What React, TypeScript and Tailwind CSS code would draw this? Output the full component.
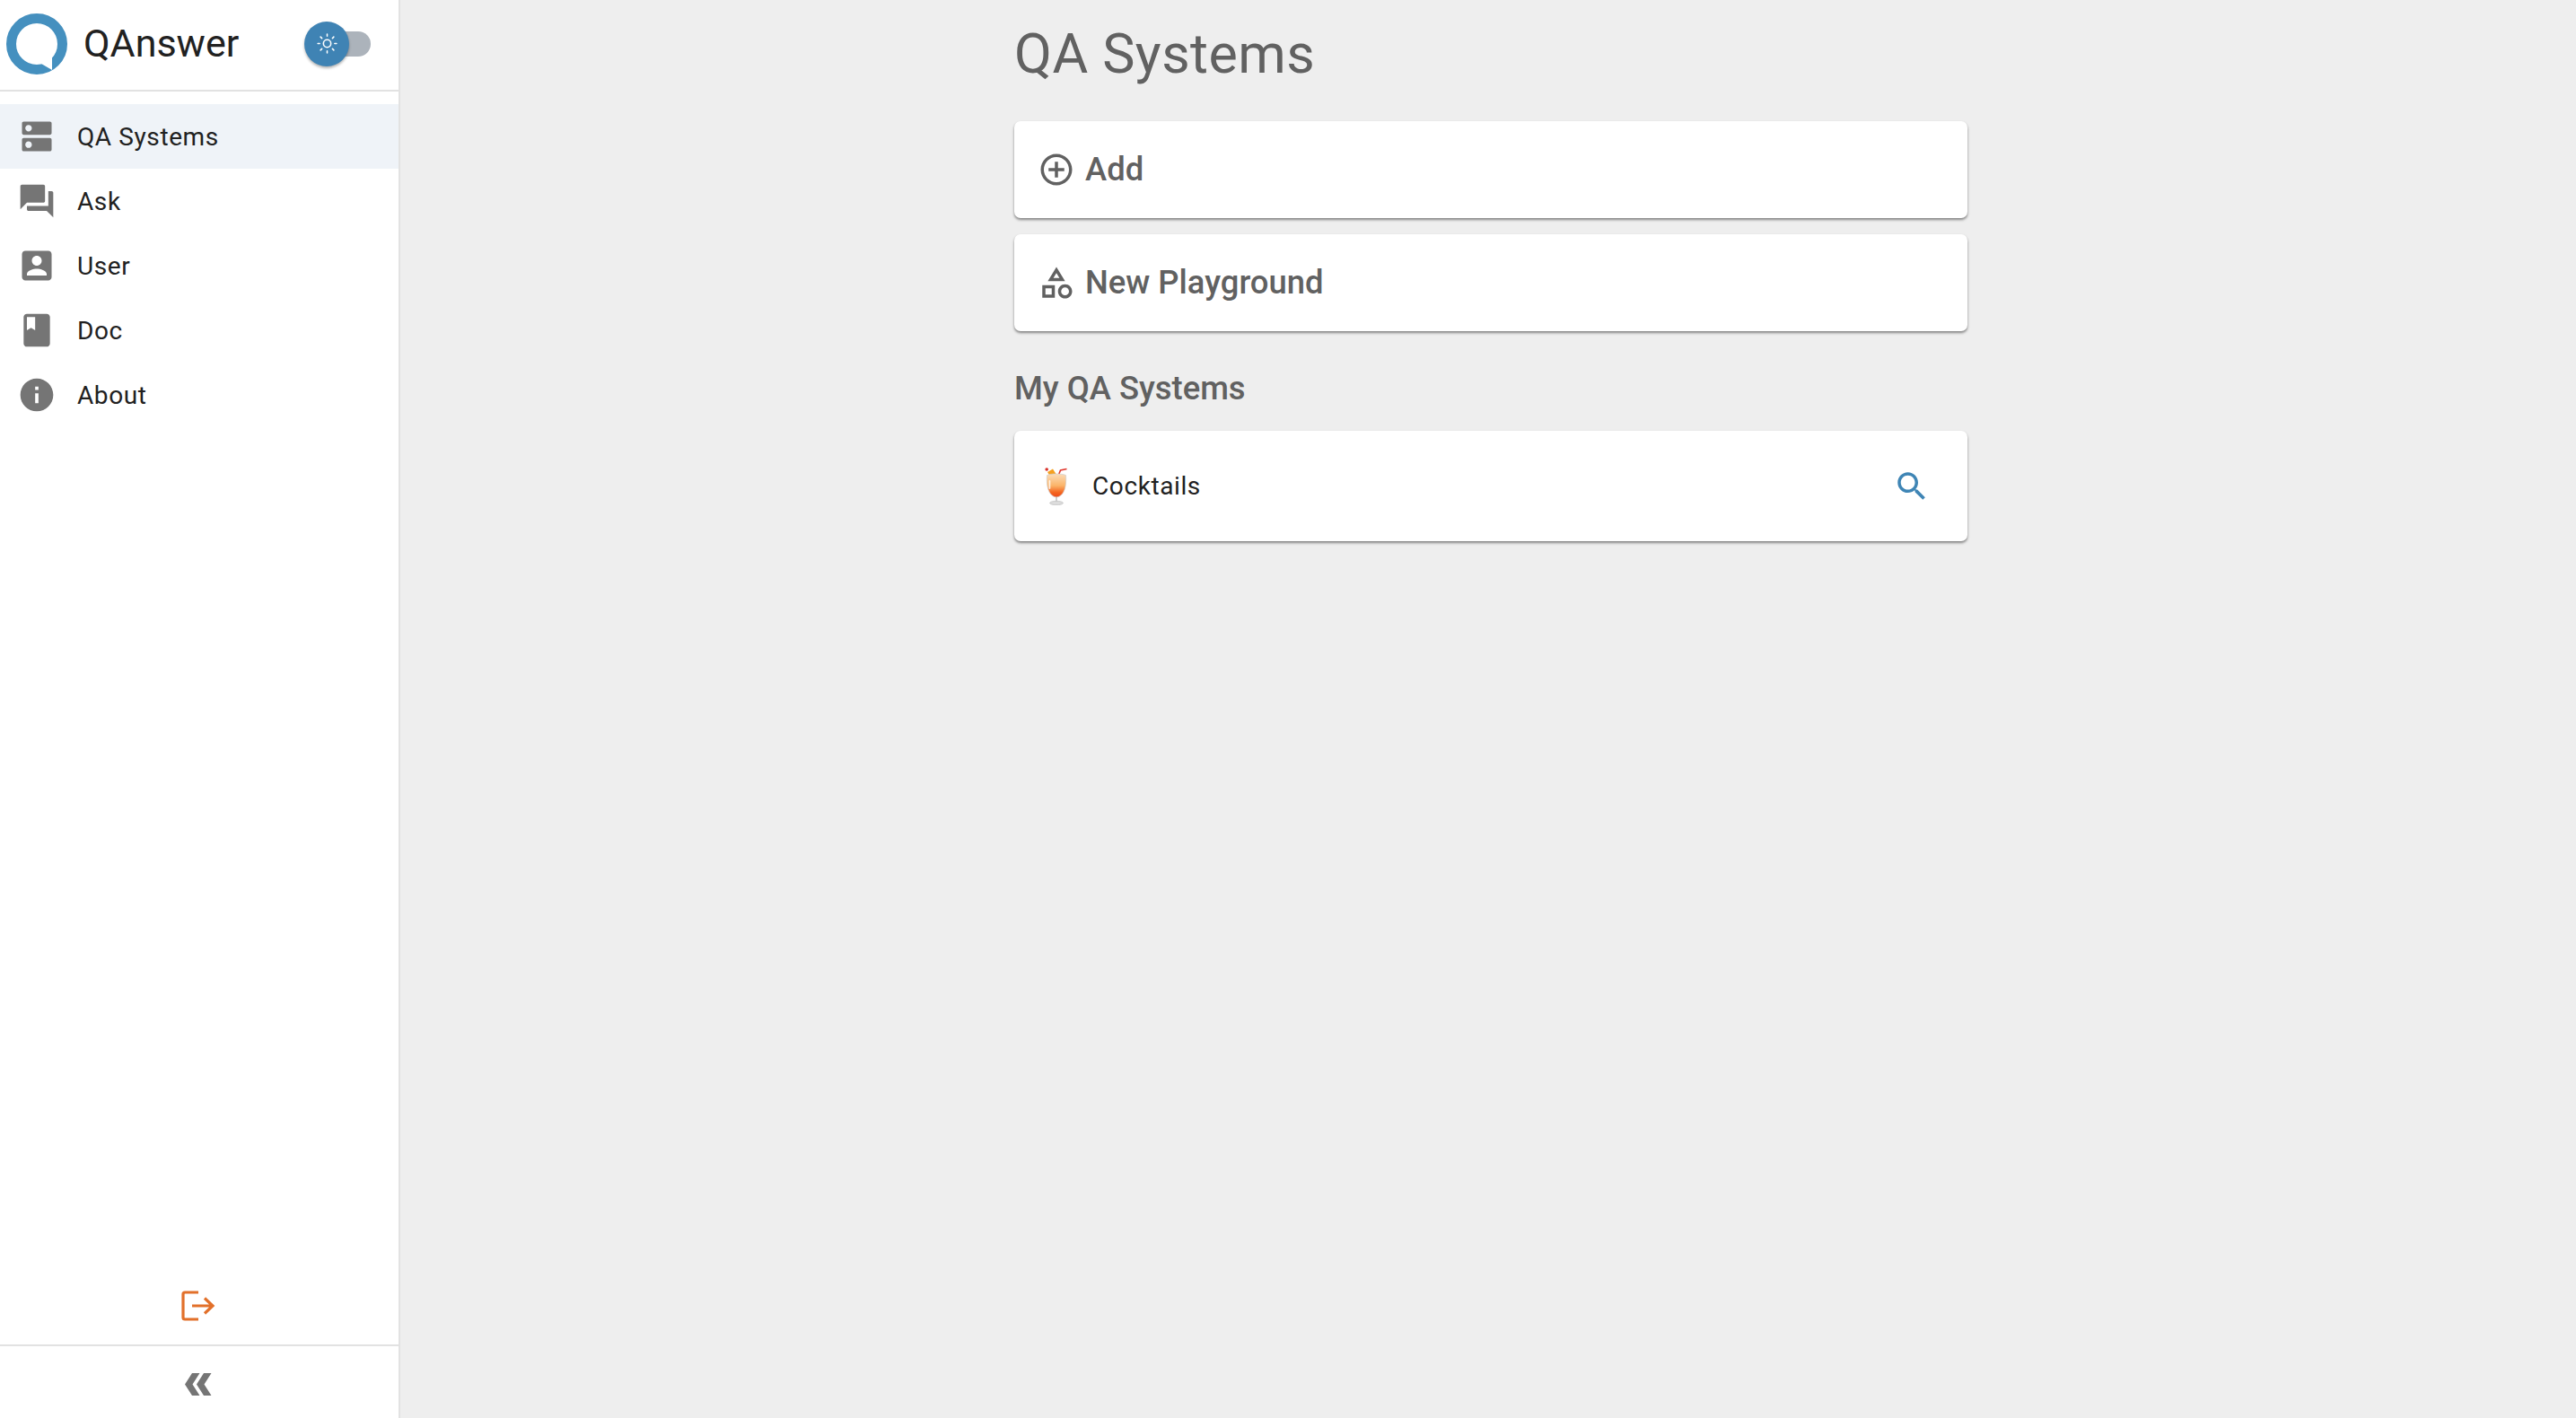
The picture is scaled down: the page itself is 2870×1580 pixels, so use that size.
import React from "react";
import { Sun } from "lucide-react";

const paths = {
  dns: "M20 13H4c-.55 0-1 .45-1 1v6c0 .55.45 1 1 1h16c.55 0 1-.45 1-1v-6c0-.55-.45-1-1-1zM7 19c-1.1 0-2-.9-2-2s.9-2 2-2 2 .9 2 2-.9 2-2 2zM20 3H4c-.55 0-1 .45-1 1v6c0 .55.45 1 1 1h16c.55 0 1-.45 1-1V4c0-.55-.45-1-1-1zM7 9c-1.1 0-2-.9-2-2s.9-2 2-2 2 .9 2 2-.9 2-2 2z",
  forum: "M21 6h-2v9H6v2c0 .55.45 1 1 1h11l4 4V7c0-.55-.45-1-1-1zm-4 6V3c0-.55-.45-1-1-1H3c-.55 0-1 .45-1 1v14l4-4h10c.55 0 1-.45 1-1z",
  user: "M19 3H5c-1.11 0-2 .9-2 2v14c0 1.1.89 2 2 2h14c1.1 0 2-.9 2-2V5c0-1.1-.9-2-2-2zm-7 3c1.66 0 3 1.34 3 3s-1.34 3-3 3-3-1.34-3-3 1.34-3 3-3zm6 12H6v-1c0-2 4-3.1 6-3.1s6 1.1 6 3.1v1z",
  book: "M18 2H6c-1.1 0-2 .9-2 2v16c0 1.1.9 2 2 2h12c1.1 0 2-.9 2-2V4c0-1.1-.9-2-2-2zM6 4h5v8l-2.5-1.5L6 12V4z",
  info: "M12 2C6.48 2 2 6.48 2 12s4.48 10 10 10 10-4.48 10-10S17.52 2 12 2zm1 15h-2v-6h2v6zm0-8h-2V7h2v2z",
  add: "M13 7h-2v4H7v2h4v4h2v-4h4v-2h-4V7zm-1-5C6.48 2 2 6.48 2 12s4.48 10 10 10 10-4.48 10-10S17.52 2 12 2zm0 18c-4.41 0-8-3.59-8-8s3.59-8 8-8 8 3.59 8 8-3.59 8-8 8z",
  category: "M12 2l-5.5 9h11L12 2zm0 3.84L13.93 9h-3.87L12 5.84zM17.5 13c-2.49 0-4.5 2.01-4.5 4.5s2.01 4.5 4.5 4.5 4.5-2.01 4.5-4.5-2.01-4.5-4.5-4.5zm0 7c-1.38 0-2.5-1.12-2.5-2.5s1.12-2.5 2.5-2.5 2.5 1.12 2.5 2.5-1.12 2.5-2.5 2.5zM3 21.5h8v-8H3v8zm2-6h4v4H5v-4z",
  search: "M15.5 14h-.79l-.28-.27C15.41 12.59 16 11.11 16 9.5 16 5.91 13.09 3 9.5 3S3 5.91 3 9.5 5.91 16 9.5 16c1.61 0 3.09-.59 4.23-1.57l.27.28v.79l5 4.99L20.49 19l-4.99-5zm-6 0C7.01 14 5 11.99 5 9.5S7.01 5 9.5 5 14 7.01 14 9.5 11.99 14 9.5 14z",
};

const Icon = ({ d, className }: { d: string; className: string }) => (
  <svg viewBox="0 0 24 24" fill="currentColor" className={className}>
    <path d={d} />
  </svg>
);

const Logo = () => (
  <svg viewBox="0 0 68 68" className="w-[68px] h-[68px] shrink-0">
    <circle cx="34" cy="34" r="28.5" fill="none" stroke="#4590bf" strokeWidth="11" />
    <polygon points="51,48 51,63 39,56" fill="#ffffff" />
  </svg>
);

const CocktailIcon = () => (
  <svg viewBox="0 0 26 42" className="w-[26px] h-[42px]">
    <defs>
      <linearGradient id="drink" x1="0" y1="0" x2="0" y2="1">
        <stop offset="0" stopColor="#fbdcb8" />
        <stop offset="0.5" stopColor="#fbb56a" />
        <stop offset="0.8" stopColor="#f4641f" />
        <stop offset="1" stopColor="#ee4a1a" />
      </linearGradient>
    </defs>
    <path d="M15.5 8 L17.5 3 L24.5 1.5" fill="none" stroke="#e0352b" strokeWidth="1.6" />
    <polygon points="3,5 9,1.5 12.5,7 6,10" fill="#f5a01f" />
    <circle cx="2.2" cy="2" r="1.8" fill="#d8322b" />
    <path d="M2.5 8.5 C7 6.5 19 6.5 23.5 8.5 C24.5 20 22 32 13 33 C4 32 1.5 20 2.5 8.5Z" fill="url(#drink)" stroke="#cfcfcf" strokeWidth="0.7" />
    <rect x="4.5" y="14" width="1.8" height="10" rx="0.9" fill="#ffffff" opacity="0.8" />
    <rect x="12.2" y="33" width="1.6" height="5" fill="#c4c4c4" />
    <ellipse cx="13" cy="39.5" rx="7.5" ry="2.2" fill="#dcdcdc" stroke="#b8b8b8" strokeWidth="0.6" />
  </svg>
);

const navItems = [
  { label: "QA Systems", icon: paths.dns, active: true },
  { label: "Ask", icon: paths.forum },
  { label: "User", icon: paths.user },
  { label: "Doc", icon: paths.book },
  { label: "About", icon: paths.info },
];

const Card = ({ children, className }: { children: React.ReactNode; className: string }) => (
  <div className={`flex items-center bg-white rounded-[7px] shadow-[0_2px_3px_rgba(0,0,0,0.45)] ${className}`}>
    {children}
  </div>
);

export default function App() {
  return (
    <div className="flex h-[1580px] w-[2870px] overflow-hidden bg-[#eeeeee] font-['Roboto',sans-serif]">
      {/* Sidebar */}
      <aside className="flex flex-col w-[446px] shrink-0 bg-white border-r-2 border-[#e2e2e2]">
        <div className="flex items-center h-[102px] pl-[7px] pb-[3px] border-b-2 border-[#e2e2e2] shrink-0">
          <Logo />
          <span className="ml-[18px] text-[43px] text-[#212121] leading-none">QAnswer</span>
          <div className="relative ml-[73px] w-[74px] h-[28px] shrink-0">
            <div className="absolute right-0 top-0 w-[60px] h-[28px] rounded-full bg-[#acb3bb]" />
            <div className="absolute left-0 top-[-11px] flex items-center justify-center w-[50px] h-[50px] rounded-full bg-[#3f83b4] shadow-[0_2px_3px_rgba(0,0,0,0.3)]">
              <Sun size={25} strokeWidth={1.5} className="text-white" />
            </div>
          </div>
        </div>

        <nav className="flex flex-col pt-[14px]">
          {navItems.map((item) => (
            <div
              key={item.label}
              className={`flex items-center h-[72px] pl-[19px] ${item.active ? "bg-[#eff3f8]" : ""}`}
            >
              <Icon d={item.icon} className="w-[44px] h-[44px] text-[#757575]" />
              <span className="ml-[23px] pt-[1px] text-[28px] tracking-[0.6px] text-[#212121]">{item.label}</span>
            </div>
          ))}
        </nav>

        <div className="flex-1 flex items-end justify-center pb-[26px] pr-[2px]">
          <svg viewBox="0 0 38 34" fill="none" stroke="#e2702a" strokeWidth="3.2" className="w-[38px] h-[34px]">
            <path d="M19 2 H4 Q2 2 2 4 V30 Q2 32 4 32 H19" />
            <path d="M12 17 H35 M26 8.5 L35 17 L26 25.5" />
          </svg>
        </div>

        <div className="flex items-center justify-center h-[82px] pt-[5px] pr-[2px] border-t-2 border-[#e2e2e2] shrink-0">
          <svg viewBox="0 0 30 25" fill="#757575" className="w-[30px] h-[25px]">
            <polygon points="8,0 16.5,0 8.5,12.5 16.5,25 8,25 0,12.5" />
            <polygon points="21,0 29.5,0 21.5,12.5 29.5,25 21,25 13,12.5" />
          </svg>
        </div>
      </aside>

      {/* Main Content */}
      <main className="flex-1 flex justify-center pl-[6px]">
        <div className="flex flex-col w-[1062px]">
          <h1 className="mt-[24px] text-[61px] leading-[72px] tracking-[0.44px] text-[#616161]">QA Systems</h1>

          <Card className="mt-[39px] h-[108px] pl-[26px] gap-[11px] text-[#616161]">
            <Icon d={paths.add} className="w-[42px] h-[42px]" />
            <span className="text-[36.4px] font-medium">Add</span>
          </Card>

          <Card className="mt-[18px] h-[108px] pl-[26px] gap-[11px] text-[#616161]">
            <Icon d={paths.category} className="w-[42px] h-[42px]" />
            <span className="text-[36.4px] font-medium">New Playground</span>
          </Card>

          <h2 className="mt-[34px] text-[36.4px] leading-[60px] font-medium text-[#616161]">My QA Systems</h2>

          <Card className="mt-[17px] h-[123px] pl-[34px] pr-[41px]">
            <CocktailIcon />
            <span className="ml-[27px] text-[28px] tracking-[0.6px] text-[#212121]">Cocktails</span>
            <Icon d={paths.search} className="ml-auto w-[42px] h-[42px] text-[#3f85b5]" />
          </Card>
        </div>
      </main>
    </div>
  );
}
